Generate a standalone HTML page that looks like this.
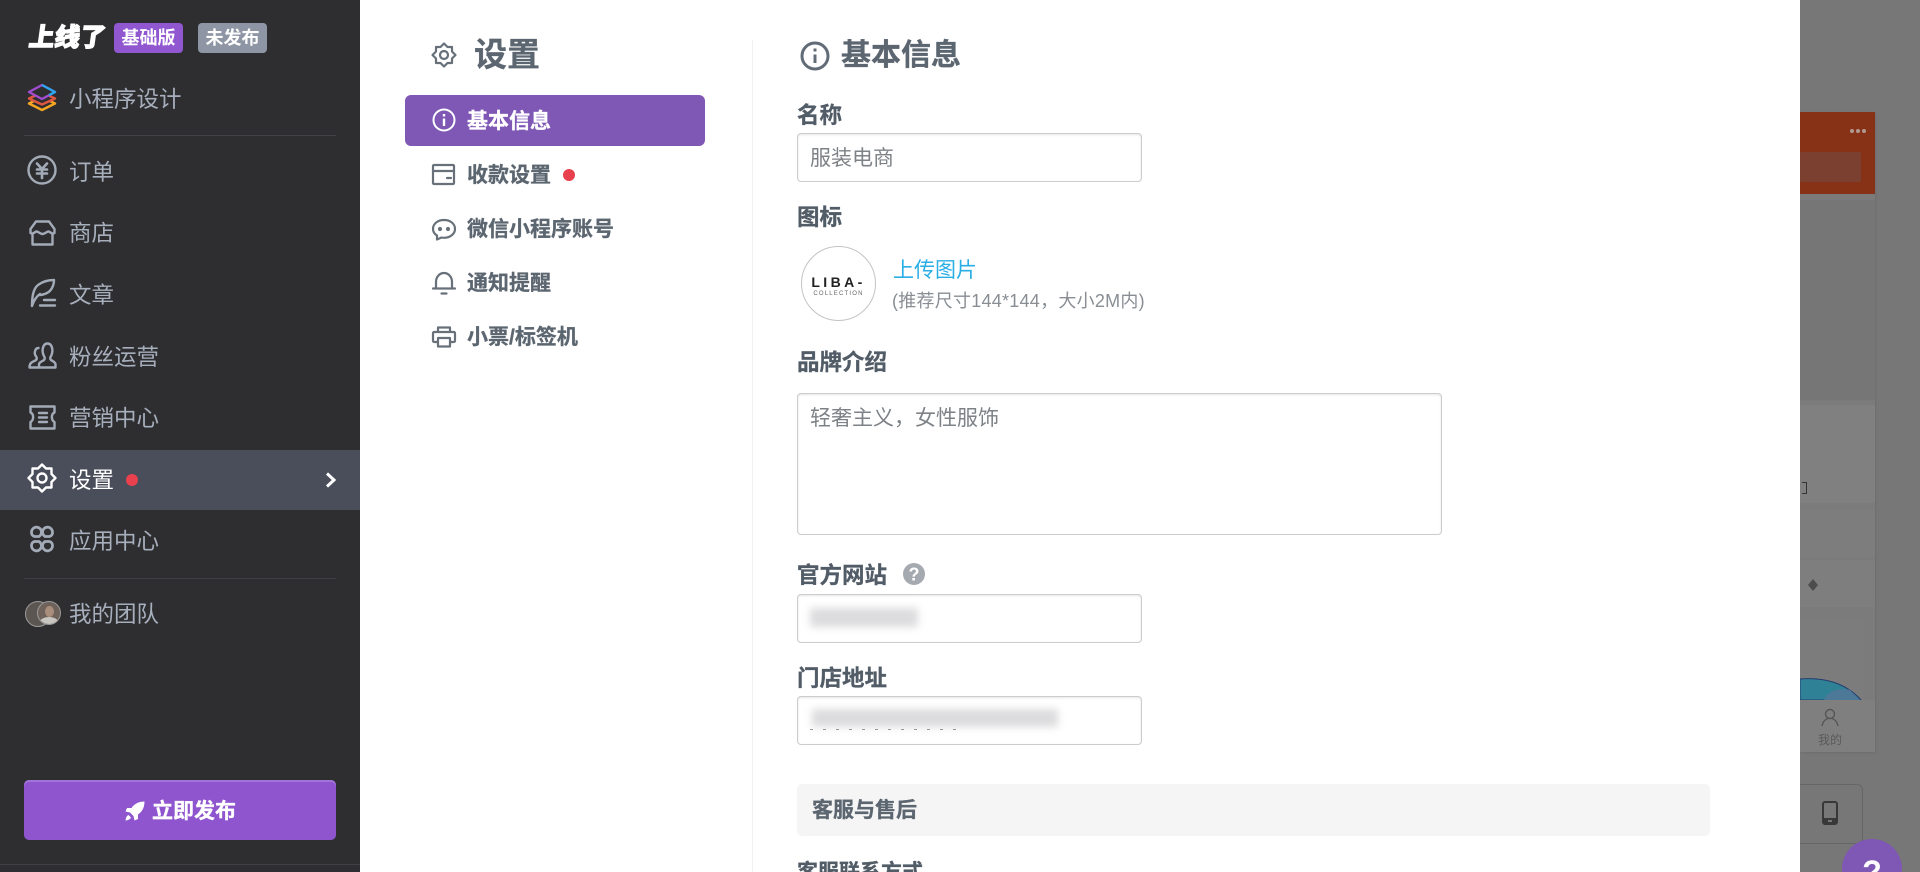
<!DOCTYPE html>
<html lang="zh"><head><meta charset="utf-8"><title>设置</title>
<style>
html,body{margin:0;padding:0;width:1920px;height:872px;overflow:hidden;background:#777}
body{position:relative;font-family:"Liberation Sans","Noto Sans CJK SC",sans-serif}
.a{position:absolute}
.t{position:absolute;line-height:30px;height:30px;white-space:nowrap}
#side{left:0;top:0;width:360px;height:872px;background:#2e2e30}
.m{font-size:22.5px;color:#a7afbd;left:69px;margin-top:1px}
#panel{left:360px;top:0;width:1440px;height:872px;background:#fff;overflow:hidden}
.s{font-size:21px;font-weight:700;color:#5c6670;left:107px;margin-top:1px;-webkit-text-stroke:.3px currentColor}
.l{font-size:22.5px;font-weight:700;color:#515c67;left:437px;margin-top:1px;-webkit-text-stroke:.3px currentColor}
.in{position:absolute;box-sizing:border-box;border:1px solid #cbccd0;border-radius:4px;background:#fff;box-shadow:inset 0 1px 2px rgba(0,0,0,.1)}
svg{position:absolute;overflow:visible}
.ic{fill:none;stroke:#a3abb8;stroke-width:2.4;stroke-linecap:round;stroke-linejoin:round}
.sic{fill:none;stroke:#68717a;stroke-width:2.2;stroke-linecap:round;stroke-linejoin:round}
</style></head><body>

<!-- background preview -->
<div class="a" style="left:1800px;top:112px;width:75px;height:640px;background:#7b7b7b;box-shadow:1px 1px 3px rgba(0,0,0,.08)"></div>
<div class="a" style="left:1800px;top:112px;width:75px;height:82px;background:#873116"></div>
<div class="a" style="left:1800px;top:152px;width:61px;height:30px;background:#7c4030;border-radius:2px"></div>
<div class="a" style="left:1850px;top:129px;width:4px;height:4px;border-radius:50%;background:#b09a90"></div>
<div class="a" style="left:1856px;top:129px;width:4px;height:4px;border-radius:50%;background:#b09a90"></div>
<div class="a" style="left:1862px;top:129px;width:4px;height:4px;border-radius:50%;background:#b09a90"></div>
<div class="a" style="left:1800px;top:200px;width:75px;height:200px;background:#767676"></div>
<div class="a" style="left:1800px;top:405px;width:75px;height:98px;background:#808080"></div>
<div class="a" style="left:1800px;top:510px;width:75px;height:47px;background:#7d7d7d"></div>
<div class="a" style="left:1800px;top:560px;width:75px;height:47px;background:#7e7e7e"></div>
<div class="a" style="left:1800px;top:618px;width:64px;height:82px;background:#7c7c7c"></div>
<svg style="left:1800px;top:674px" width="64" height="26"><path d="M0 5C22 3 45 8 61 26H0Z" fill="#2f8296" stroke="#243c70" stroke-width="1"/><path d="M24 26C28 16 40 14 50 16L60 26Z" fill="#4e7898"/></svg>
<div class="a" style="left:1800px;top:700px;width:75px;height:52px;background:#7f7f7f"></div>
<svg style="left:1821px;top:708px" width="18" height="20" fill="none" stroke="#555" stroke-width="1.4"><circle cx="9" cy="6" r="4.5"/><path d="M1 18C2 13 5 11 7 10.500M17 18C16 13 13 11 11 10.500"/></svg>
<div class="t" style="left:1818px;top:725px;font-size:12px;color:#5a5a5a">我的</div>
<svg style="left:1808px;top:579px" width="10" height="12"><path d="M5 0L10 6L5 12L0 6Z" fill="#4c4c4c"/></svg>
<div class="a" style="left:1802px;top:482px;width:4px;height:10px;border:1px solid #333;border-left:0"></div>
<div class="a" style="box-sizing:border-box;left:1780px;top:784px;width:83px;height:60px;border:1px solid #666;border-radius:6px"></div>
<svg style="left:1822px;top:801px" width="16" height="24"><rect x="1" y="1" width="14" height="22" rx="2" fill="none" stroke="#383838" stroke-width="2"/><rect x="1" y="17" width="14" height="6" fill="#383838"/><rect x="6" y="19" width="4" height="2" fill="#777"/></svg>
<div class="a" style="left:1842px;top:839px;width:60px;height:60px;border-radius:50%;background:#7f57b5"></div>
<div class="t" style="left:1860px;top:857px;font-size:32px;font-weight:700;color:#fff;width:24px;text-align:center">?</div>

<!-- sidebar -->
<div class="a" id="side">
  <div class="t" style="left:27px;top:23px;font-size:25.5px;font-weight:900;color:#fff;-webkit-text-stroke:1.1px #fff;transform:skewX(-8deg);transform-origin:left bottom">上线了</div>
  <div class="t" style="left:114px;top:23px;width:69px;text-align:center;background:#9057d0;border-radius:4px;font-size:18px;font-weight:700;color:#fff">基础版</div>
  <div class="t" style="left:198px;top:23px;width:69px;text-align:center;background:#8e96a5;border-radius:4px;font-size:18px;font-weight:700;color:#fff">未发布</div>

  <svg style="left:28px;top:83px" width="28" height="28" stroke-width="2.4" stroke-linejoin="round">
    <path d="M14 14L27 20.500L14 27L1 20.500Z" fill="#2e2e30" stroke="#f6a623"/>
    <path d="M14 9.500L27 15.500L14 21.500L1 15.500Z" fill="#2e2e30" stroke="#e0563f"/>
    <path d="M14 2L27 9L14 16L1 9Z" fill="#2e2e30" stroke="#a04dd0"/>
    <path d="M14 2L27 9L21 12.200" fill="none" stroke="#2ba6f0"/>
  </svg>
  <div class="t m" style="top:84px">小程序设计</div>
  <div class="a" style="left:24px;top:135px;width:312px;height:1px;background:#434347"></div>

  <svg class="ic" style="left:27px;top:155px" width="30" height="30"><circle cx="15" cy="15" r="13.500"/><path d="M10 8.500L15 14L20 8.500M10 14.500H20M10 18.500H20M15 14V23" stroke-width="2.600"/></svg>
  <div class="t m" style="top:157px">订单</div>

  <svg class="ic" style="left:29px;top:220px" width="27" height="26"><path d="M7 1.500H20L25.500 9V13C23 15 21 11.500 19.500 11.500C17.500 11.500 16 14 13.500 14C11 14 9.500 11.500 7.500 11.500C6 11.500 4 15 1.500 13V9ZM3.500 14V24.500H23.500V14"/></svg>
  <div class="t m" style="top:218px">商店</div>

  <svg class="ic" style="left:30px;top:279px" width="26" height="28"><path d="M2 27C2 18 3 10 8 6C12 3 18 1 24 1C24 7 21 12 17 14C14 15.500 11 16 9 16M2 27C4 21 7 17 10 15M14 21H25M10 26.500H25"/></svg>
  <div class="t m" style="top:280px">文章</div>

  <svg class="ic" style="left:28px;top:342px" width="29" height="27"><path d="M1.500 25.500C1.500 20 5 20 8 18C9.500 16.500 8.500 15 7.500 13.500C6 11 7 6 10.500 6M11 25.500H1.500M27.500 25.500H11V22.500C11 20 14 19.500 16 18C17.500 16.500 16.500 15 15.500 13C13.500 8 15 1.500 19.500 1.500C24 1.500 25.500 8 23.500 13C22.500 15 21.500 16.500 23 18C25 19.500 27.500 20 27.500 22.500Z"/></svg>
  <div class="t m" style="top:342px">粉丝运营</div>

  <svg class="ic" style="left:29px;top:405px" width="27" height="25"><path d="M1.500 1.500H25.500V7.500C22 9 22 15 25.500 17V23.500H1.500V17C5 15 5 9 1.500 7.500ZM10 8H18M10 12.500H18M10 17H18"/></svg>
  <div class="t m" style="top:403px">营销中心</div>

  <div class="a" style="left:0;top:450px;width:360px;height:60px;background:#4a4e5a"></div>
  <svg class="ic" style="left:27px;top:463px;stroke:#fff" width="30" height="30"><path d="M15 1.500L19 5.500H24.500V11L28.500 15L24.500 19V24.500H19L15 28.500L11 24.500H5.500V19L1.500 15L5.500 11V5.500H11Z"/><circle cx="15" cy="15" r="4.500"/></svg>
  <div class="t m" style="top:465px;color:#fff">设置</div>
  <div class="a" style="left:126px;top:474px;width:12px;height:12px;border-radius:50%;background:#e8404d"></div>
  <svg style="left:325px;top:472px" width="12" height="16" fill="none" stroke="#fff" stroke-width="3"><path d="M2 1.500L9 8L2 14.500"/></svg>

  <svg class="ic" style="left:28px;top:525px" width="28" height="28"><path d="M3.500 7.500A5 5 0 1 1 11 11.500H6.500A4 4 0 0 1 3.500 7.500ZM24.500 7.500A5 5 0 1 0 17 11.500H21.500A4 4 0 0 0 24.500 7.500ZM3.500 20.500A5 5 0 1 0 11 16.500H6.500A4 4 0 0 0 3.500 20.500ZM24.500 20.500A5 5 0 1 1 17 16.500H21.500A4 4 0 0 1 24.500 20.500Z" stroke-width="2.800"/></svg>
  <div class="t m" style="top:526px">应用中心</div>
  <div class="a" style="left:24px;top:578px;width:312px;height:1px;background:#3f3f43"></div>

  <div class="a" style="left:25px;top:601px;width:24px;height:24px;border-radius:50%;background:#5b5651;border:1px solid #9a9a9a"></div>
  <div class="a" style="left:37px;top:601px;width:22px;height:22px;border-radius:50%;background:#6e625a;border:1px solid #9a9a9a;overflow:hidden"><div class="a" style="left:2px;top:15px;width:18px;height:10px;background:#c9c5c0;border-radius:50%"></div><div class="a" style="left:7px;top:4px;width:9px;height:11px;background:#a98e7c;border-radius:50%"></div></div>
  <div class="t m" style="top:599px">我的团队</div>

  <div class="a" style="left:24px;top:780px;width:312px;height:60px;background:#8e55cf;border-radius:5px;box-shadow:inset 0 2px 0 #a274d8"></div>
  <svg style="left:125px;top:801px" width="20" height="20"><path d="M19.500 .5C14 .5 9.500 2.500 6.500 7H2L.5 10.500L5 11.500L8.500 15L9.500 19.500L13 18V13.500C17.500 10.500 19.500 6 19.500 .5ZM3.500 14C2 14.500 .8 16.500 .5 19.500C3.500 19.200 5.500 18 6 16.500Z" fill="#fff"/></svg>
  <div class="t" style="left:152px;top:797px;font-size:21px;font-weight:700;color:#fff;-webkit-text-stroke:.3px #fff">立即发布</div>
  <div class="a" style="left:0;top:864px;width:360px;height:1px;background:#414145"></div>
</div>

<!-- panel -->
<div class="a" id="panel">
  <div class="a" style="left:392px;top:40px;width:1px;height:832px;background:#f1f1f2"></div>

  <svg class="sic" style="left:71px;top:42px" width="26" height="26"><path d="M13 1.500L16.500 5H21V9.500L24.500 13L21 16.500V21H16.500L13 24.500L9.500 21H5V16.500L1.500 13L5 9.500V5H9.500Z"/><circle cx="13" cy="13" r="4"/></svg>
  <div class="t" style="left:114px;top:40px;font-size:33px;font-weight:700;color:#5c6670;-webkit-text-stroke:.3px #5c6670">设置</div>

  <div class="a" style="left:45px;top:95px;width:300px;height:51px;background:#7f58b6;border-radius:6px"></div>
  <svg style="left:72px;top:108px" width="24" height="24" fill="none" stroke="#fff" stroke-width="2"><circle cx="12" cy="12" r="10.500"/><path d="M12 10.500V18M12 6V8.500" stroke-width="2.400"/></svg>
  <div class="t s" style="top:106px;color:#fff">基本信息</div>

  <svg class="sic" style="left:72px;top:164px" width="24" height="21"><rect x="1" y="1" width="21" height="19" rx="1"/><path d="M1 7H22M15 14H19"/></svg>
  <div class="t s" style="top:160px">收款设置</div>
  <div class="a" style="left:203px;top:169px;width:12px;height:12px;border-radius:50%;background:#e8404d"></div>

  <svg class="sic" style="left:72px;top:219px" width="24" height="22"><path d="M12 1C6 1 1 4.500 1 10C1 13 2.500 15 5 16.500V20.500L9.500 18.500C10.500 18.800 11 18.800 12 18.800C18 18.800 23 15 23 10C23 4.500 18 1 12 1Z"/><circle cx="8" cy="10" r="1" fill="#68717a"/><circle cx="16" cy="10" r="1" fill="#68717a"/></svg>
  <div class="t s" style="top:214px">微信小程序账号</div>

  <svg class="sic" style="left:72px;top:271px" width="24" height="24"><path d="M1 17.500H23M4 17.500V11C4 6 7.500 2 12 2C16.500 2 20 6 20 11V17.500M9.500 22.500H14.500"/></svg>
  <div class="t s" style="top:268px">通知提醒</div>

  <svg class="sic" style="left:72px;top:326px" width="24" height="22"><path d="M6 6V1.500H18V6M6 16H2.500C1.500 16 1 15.500 1 14.500V7.500C1 6.500 1.500 6 2.500 6H21.500C22.500 6 23 6.500 23 7.500V14.500C23 15.500 22.500 16 21.500 16H18M6 12H18V20.500H6Z"/></svg>
  <div class="t s" style="top:322px">小票/标签机</div>

  <svg style="left:440px;top:41px" width="30" height="30" fill="none" stroke="#616c77" stroke-width="3"><circle cx="15" cy="15" r="13"/><path d="M15 13.500V22M15 7.500V10.500" stroke-width="3"/></svg>
  <div class="t" style="left:481px;top:41px;font-size:30px;font-weight:700;color:#5c6670;-webkit-text-stroke:.3px #5c6670">基本信息</div>

  <div class="t l" style="top:100px">名称</div>
  <div class="in" style="left:437px;top:133px;width:345px;height:49px"></div>
  <div class="t" style="left:450px;top:144px;font-size:21px;color:#7d8287">服装电商</div>

  <div class="t l" style="top:202px">图标</div>
  <div class="a" style="left:441px;top:246px;box-sizing:border-box;width:75px;height:75px;border-radius:50%;border:1.500px solid #c4c4c4;background:#fff"></div>
  <div class="t" style="left:441px;top:267px;width:75px;text-align:center;font-size:14px;font-weight:700;letter-spacing:3.400px;color:#222">LIBA-</div>
  <div class="t" style="left:441px;top:279px;width:75px;text-align:center;font-size:6px;letter-spacing:1.200px;color:#666">COLLECTION</div>
  <div class="t" style="left:533px;top:256px;font-size:21px;color:#2aaee6">上传图片</div>
  <div class="t" style="left:532px;top:286px;font-size:18px;letter-spacing:.25px;color:#888e94">(推荐尺寸144*144，大小2M内)</div>

  <div class="t l" style="top:347px">品牌介绍</div>
  <div class="in" style="left:437px;top:393px;width:645px;height:142px"></div>
  <div class="t" style="left:450px;top:404px;font-size:21px;color:#7d8287">轻奢主义，女性服饰</div>

  <div class="t l" style="top:560px">官方网站</div>
  <svg style="left:543px;top:563px" width="22" height="22"><circle cx="11" cy="11" r="11" fill="#a5a9b0"/><text x="11" y="17.500" font-size="18" font-weight="700" fill="#fff" text-anchor="middle" font-family="Liberation Sans">?</text></svg>
  <div class="in" style="left:437px;top:594px;width:345px;height:49px"></div>
  <div class="a" style="left:450px;top:608px;width:108px;height:19px;background:#dcdcde;filter:blur(4px)"></div>

  <div class="t l" style="top:663px">门店地址</div>
  <div class="in" style="left:437px;top:696px;width:345px;height:49px"></div>
  <div class="a" style="left:452px;top:709px;width:246px;height:18px;background:#dcdcde;filter:blur(4px)"></div>
  <div class="a" style="left:450px;top:729px;width:150px;height:1px;background:repeating-linear-gradient(90deg,#999 0 3px,transparent 3px 13px)"></div>

  <div class="a" style="left:437px;top:784px;width:913px;height:52px;background:#f5f5f5;border-radius:5px"></div>
  <div class="t" style="left:452px;top:796px;font-size:21px;font-weight:700;color:#5c6670;-webkit-text-stroke:.3px #5c6670">客服与售后</div>

  <div class="t" style="left:437px;top:858px;font-size:21px;font-weight:700;color:#515c67;-webkit-text-stroke:.3px #515c67">客服联系方式</div>
</div>
</body></html>
